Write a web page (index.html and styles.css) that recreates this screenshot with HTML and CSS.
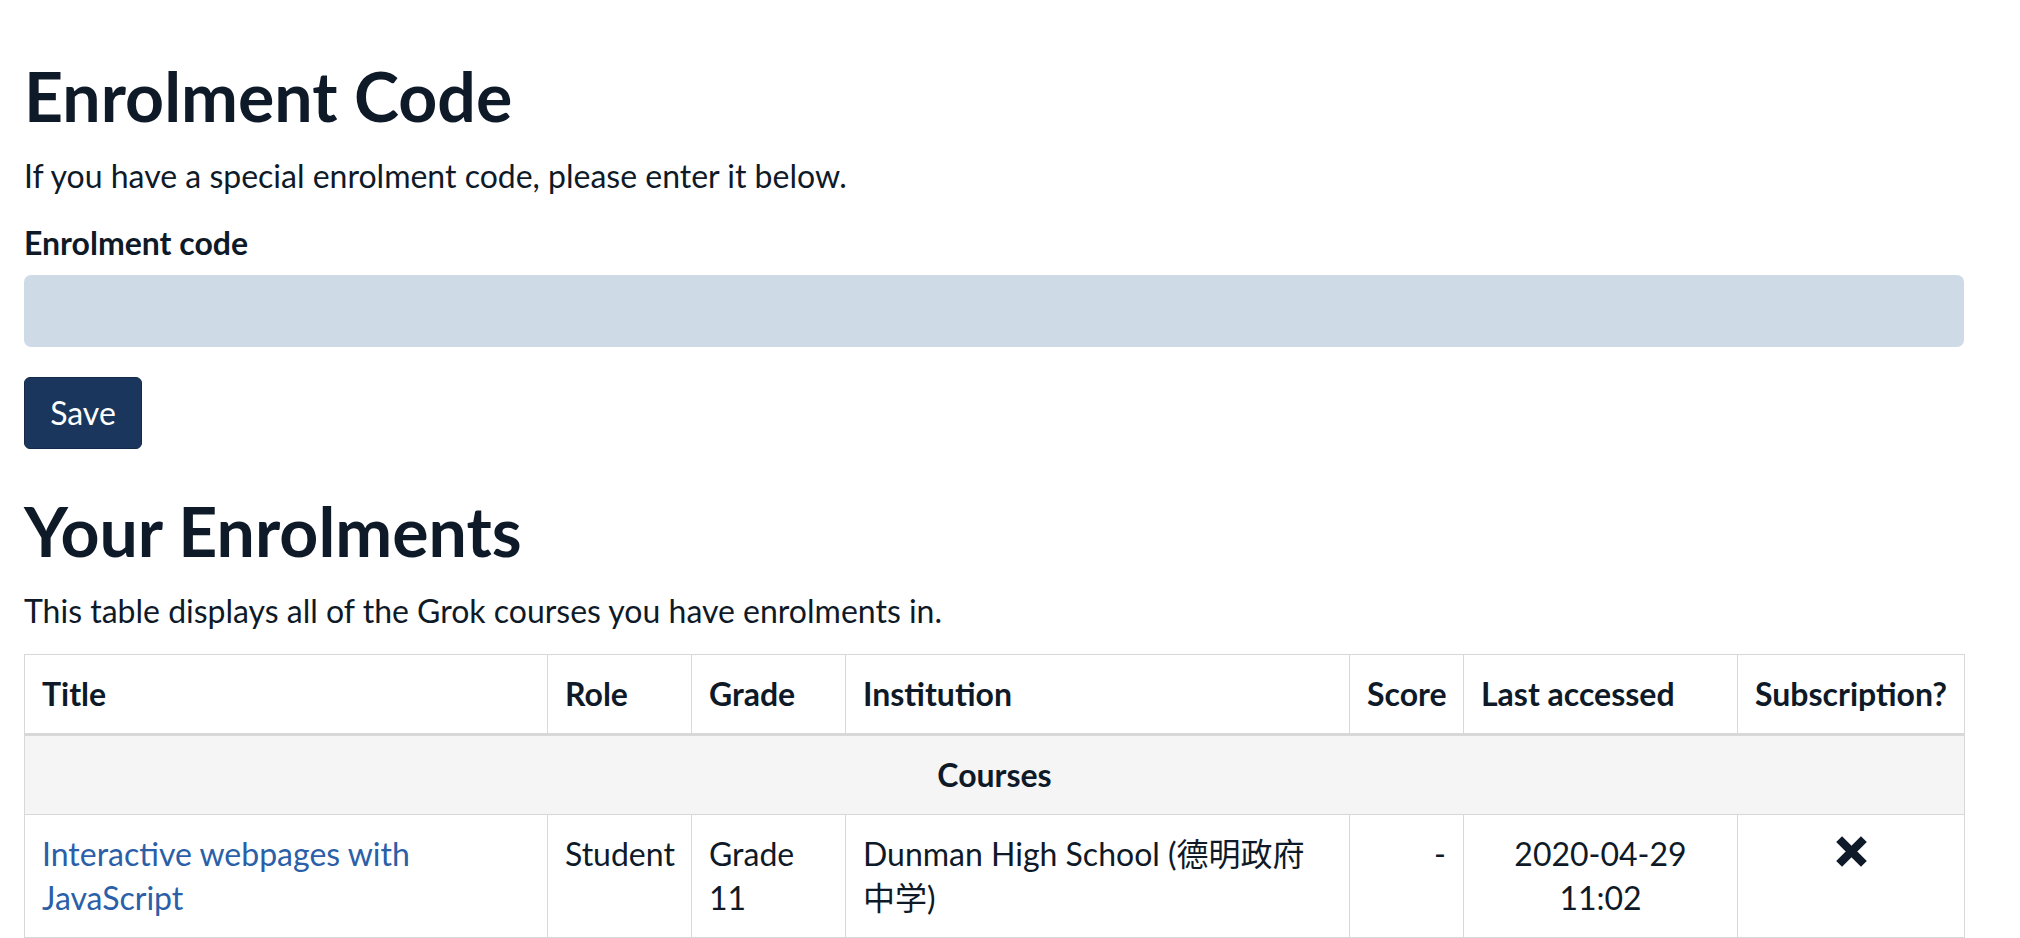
FILE: index.html
```html
<!DOCTYPE html>
<html lang="en">
<head>
<meta charset="utf-8">
<title>Enrolments</title>
<link rel="stylesheet" href="styles.css">
</head>
<body>
<main class="page">
  <section class="code-section">
    <h1 class="title">Enrolment Code</h1>
    <p class="lead">If you have a special enrolment code, please enter it below.</p>
    <form class="code-form">
      <label class="field-label" for="code">Enrolment code</label>
      <input class="field-input" id="code" type="text">
      <button class="btn-save" type="button">Save</button>
    </form>
  </section>
  <section class="enrol-section">
    <h1 class="title">Your Enrolments</h1>
    <p class="lead">This table displays all of the Grok courses you have enrolments in.</p>
    <table class="enrol-table">
      <colgroup>
        <col class="c-title"><col class="c-role"><col class="c-grade"><col class="c-inst"><col class="c-score"><col class="c-last"><col class="c-sub">
      </colgroup>
      <thead>
        <tr>
          <th>Title</th>
          <th>Role</th>
          <th>Grade</th>
          <th>Institution</th>
          <th>Score</th>
          <th>Last accessed</th>
          <th>Subscription?</th>
        </tr>
      </thead>
      <tbody>
        <tr class="group-row">
          <th colspan="7">Courses</th>
        </tr>
        <tr>
          <td><a class="course-link" href="#">Interactive webpages with JavaScript</a></td>
          <td>Student</td>
          <td>Grade 11</td>
          <td>Dunman High School (德明政府中学)</td>
          <td class="num">-</td>
          <td class="center">2020-04-29 11:02</td>
          <td class="center"><svg class="x-icon" width="33" height="33" viewBox="0 0 32 32" aria-label="No"><path d="M4 4 L28 28 M28 4 L4 28" stroke="#0f1a28" stroke-width="8" fill="none"/></svg></td>
        </tr>
      </tbody>
    </table>
  </section>
</main>
</body>
</html>
```

FILE: styles.css
```css
html, body {
  margin: 0;
  padding: 0;
  background: #ffffff;
}

body {
  font-family: Lato, "Noto Sans CJK SC", "Noto Sans", sans-serif;
  font-size: 32px;
  line-height: 44px;
  color: #0f1a28;
}

.page {
  padding: 54px 56px 0 24px;
}

.title {
  font-size: 68px;
  line-height: 84px;
  font-weight: 700;
  margin: 0 0 16px 0;
  color: #0f1a28;
}

.lead {
  margin: 0 0 23px 0;
}

.code-form {
  display: flex;
  flex-direction: column;
  align-items: flex-start;
}

.field-label {
  font-weight: 700;
  margin-bottom: 10px;
}

.field-input {
  box-sizing: border-box;
  width: 100%;
  height: 72px;
  border: none;
  border-radius: 7px;
  background: #cfdae7;
  font: inherit;
  padding: 0 18px;
  margin: 0 0 30px 0;
}

.btn-save {
  box-sizing: border-box;
  height: 72px;
  width: 118px;
  padding: 0;
  border: 1px solid #132a4a;
  border-radius: 6px;
  background: #1b365d;
  color: #ffffff;
  font: inherit;
  line-height: 44px;
  margin: 0 0 40px 0;
}

.enrol-section .lead {
  margin-bottom: 21px;
}

.enrol-table {
  border-collapse: collapse;
  table-layout: fixed;
  width: 1940px;
}

.c-title { width: 523px; }
.c-role { width: 144px; }
.c-grade { width: 154px; }
.c-inst { width: 504px; }
.c-score { width: 114px; }
.c-last { width: 274px; }
.c-sub { width: 227px; }

.enrol-table th,
.enrol-table td {
  border: 1px solid #d8d8d8;
  padding: 17px 17px;
  vertical-align: top;
  text-align: left;
  line-height: 44px;
}

.enrol-table th {
  font-weight: 700;
}

.enrol-table thead th {
  border-bottom: 3px solid #d8d8d8;
}

.group-row th {
  background: #f5f5f5;
  text-align: center;
}

.enrol-table td.num {
  text-align: right;
}

.enrol-table td.center {
  text-align: center;
}

.course-link {
  color: #2b5fa8;
  text-decoration: none;
}

.x-icon {
  display: block;
  margin: 3px auto 0;
}
```
